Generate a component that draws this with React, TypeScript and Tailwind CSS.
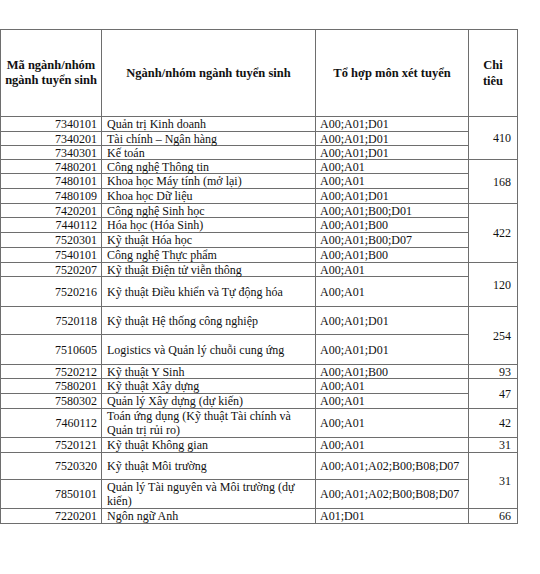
import React from "react";

type Row = { code: string; name: React.ReactNode; combo: string; quota?: { v: string; span: number } };

const rows: Row[] = [
  { code: "7340101", name: "Quản trị Kinh doanh", combo: "A00;A01;D01", quota: { v: "410", span: 3 } },
  { code: "7340201", name: "Tài chính – Ngân hàng", combo: "A00;A01;D01" },
  { code: "7340301", name: "Kế toán", combo: "A00;A01;D01" },
  { code: "7480201", name: "Công nghệ Thông tin", combo: "A00;A01", quota: { v: "168", span: 3 } },
  { code: "7480101", name: "Khoa học Máy tính (mở lại)", combo: "A00;A01" },
  { code: "7480109", name: "Khoa học Dữ liệu", combo: "A00;A01;D01" },
  { code: "7420201", name: "Công nghệ Sinh học", combo: "A00;A01;B00;D01", quota: { v: "422", span: 4 } },
  { code: "7440112", name: "Hóa học (Hóa Sinh)", combo: "A00;A01;B00" },
  { code: "7520301", name: "Kỹ thuật Hóa học", combo: "A00;A01;B00;D07" },
  { code: "7540101", name: "Công nghệ Thực phẩm", combo: "A00;A01;B00" },
  { code: "7520207", name: "Kỹ thuật Điện tử viễn thông", combo: "A00;A01", quota: { v: "120", span: 2 } },
  { code: "7520216", name: "Kỹ thuật Điều khiển và Tự động hóa", combo: "A00;A01" },
  { code: "7520118", name: "Kỹ thuật Hệ thống công nghiệp", combo: "A00;A01;D01", quota: { v: "254", span: 2 } },
  { code: "7510605", name: "Logistics và Quản lý chuỗi cung ứng", combo: "A00;A01;D01" },
  { code: "7520212", name: "Kỹ thuật Y Sinh", combo: "A00;A01;B00", quota: { v: "93", span: 1 } },
  { code: "7580201", name: "Kỹ thuật Xây dựng", combo: "A00;A01", quota: { v: "47", span: 2 } },
  { code: "7580302", name: "Quản lý Xây dựng (dự kiến)", combo: "A00;A01" },
  {
    code: "7460112",
    name: (
      <>
        Toán ứng dụng (Kỹ thuật Tài chính và
        <br />
        Quản trị rủi ro)
      </>
    ),
    combo: "A00;A01",
    quota: { v: "42", span: 1 },
  },
  { code: "7520121", name: "Kỹ thuật Không gian", combo: "A00;A01", quota: { v: "31", span: 1 } },
  { code: "7520320", name: "Kỹ thuật Môi trường", combo: "A00;A01;A02;B00;B08;D07", quota: { v: "31", span: 2 } },
  {
    code: "7850101",
    name: (
      <>
        Quản lý Tài nguyên và Môi trường (dự
        <br />
        kiến)
      </>
    ),
    combo: "A00;A01;A02;B00;B08;D07",
  },
  { code: "7220201", name: "Ngôn ngữ Anh", combo: "A01;D01", quota: { v: "66", span: 1 } },
];

const spanClass: Record<number, string> = {
  1: "row-span-1",
  2: "row-span-2",
  3: "row-span-3",
  4: "row-span-4",
};

export default function App() {
  return (
    <div className="w-[540px] h-[574px] bg-white text-[#111] overflow-hidden font-['Liberation_Serif','Times_New_Roman',serif]">
      <div className="pt-[29px]">
        <div className="grid w-[518px] grid-cols-[100px_213px_152px_48px] grid-rows-[86px_14px_13px_13px_13px_14px_14px_13px_14px_14px_14px_13px_29px_27px_29px_13px_14px_14px_28px_14px_26px_28px_14px] gap-px bg-[#6e6e6e] p-px text-[12px] leading-[14px]">
          <div className="bg-white flex items-center justify-center text-center font-bold text-[12.5px] leading-[15px]">
            Mã ngành/nhóm
            <br />
            ngành tuyển sinh
          </div>
          <div className="bg-white flex items-center justify-center text-center font-bold text-[12.5px] leading-[15px]">
            Ngành/nhóm ngành tuyển sinh
          </div>
          <div className="bg-white flex items-center justify-center text-center font-bold text-[12.5px] leading-[15px]">
            Tổ hợp môn xét tuyển
          </div>
          <div className="bg-white flex items-center justify-center text-center font-bold text-[12.5px] leading-[16px]">
            Chi
            <br />
            tiêu
          </div>
          {rows.map((r) => (
            <React.Fragment key={r.code}>
              <div className="bg-white flex items-center justify-end pr-[4px] whitespace-nowrap">{r.code}</div>
              <div className="bg-white flex items-center pl-[5px] whitespace-nowrap">
                <span>{r.name}</span>
              </div>
              <div className="bg-white flex items-center pl-[4px] whitespace-nowrap">{r.combo}</div>
              {r.quota && (
                <div className={`bg-white flex items-center justify-end pr-[6px] ${spanClass[r.quota.span]}`}>
                  {r.quota.v}
                </div>
              )}
            </React.Fragment>
          ))}
        </div>
      </div>
    </div>
  );
}
